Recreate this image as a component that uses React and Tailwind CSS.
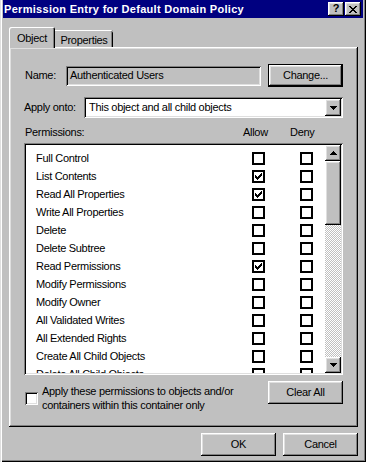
const raised =
  "shadow-[inset_-1px_-1px_#000,inset_1px_1px_#fff,inset_-2px_-2px_#808080,inset_2px_2px_#dfdfdf]";
const sunken =
  "shadow-[inset_1px_1px_#808080,inset_-1px_-1px_#fff,inset_2px_2px_#000,inset_-2px_-2px_#dfdfdf]";

const perms = [
  ["Full Control", false],
  ["List Contents", true],
  ["Read All Properties", true],
  ["Write All Properties", false],
  ["Delete", false],
  ["Delete Subtree", false],
  ["Read Permissions", true],
  ["Modify Permissions", false],
  ["Modify Owner", false],
  ["All Validated Writes", false],
  ["All Extended Rights", false],
  ["Create All Child Objects", false],
  ["Delete All Child Objects", false],
];

// classic 7x7 check mark, one 3px column per x
const Check = () => (
  <svg width="7" height="7" viewBox="0 0 7 7" shapeRendering="crispEdges">
    {[2, 3, 4, 3, 2, 1, 0].map((y, x) => (
      <rect key={x} x={x} y={y} width="1" height="3" fill="#000" />
    ))}
  </svg>
);

const FlatBox = ({ checked }) => (
  <div className="w-[13px] h-[13px] border-2 border-black bg-white flex items-center justify-center">
    {checked && <Check />}
  </div>
);

const Arrow = ({ down }) => (
  <svg width="7" height="4" viewBox="0 0 7 4" shapeRendering="crispEdges">
    {down ? (
      <polygon points="0,0 7,0 3.5,4" fill="#000" />
    ) : (
      <polygon points="3.5,0 7,4 0,4" fill="#000" />
    )}
  </svg>
);

const Button = ({ children, className = "" }) => (
  <div className={`bg-[#c0c0c0] flex items-center justify-center ${raised} ${className}`}>
    {children}
  </div>
);

export default function App() {
  return (
    <div className="w-[366px] h-[462px] bg-[#c0c0c0] flex flex-col px-[3px] font-['Liberation_Sans',Arial,sans-serif] text-[11px] tracking-[-0.3px] text-black shadow-[inset_1px_0_#dfdfdf,inset_2px_0_#fff,inset_-1px_-1px_#000,inset_-2px_-2px_#808080] overflow-hidden select-none">
      {/* title bar */}
      <div className="h-[18px] bg-[#000080] flex items-center justify-between pl-[1px] pr-[2px] shrink-0">
        <span className="text-white font-bold tracking-[0.3px]">Permission Entry for Default Domain Policy</span>
        <div className="flex gap-[1px]">
          <Button className="w-[16px] h-[14px] font-bold text-[11px] tracking-normal pb-[1px]">?</Button>
          <Button className="w-[16px] h-[14px]">
            <svg width="8" height="7" viewBox="0 0 8 7" shapeRendering="crispEdges">
              <path d="M0 0h2v1h-2zM6 0h2v1h-2zM1 1h2v1h-2zM5 1h2v1h-2zM2 2h4v1h-4zM3 3h2v1h-2zM2 4h4v1h-4zM1 5h2v1h-2zM5 5h2v1h-2zM0 6h2v1h-2zM6 6h2v1h-2z" fill="#000" />
            </svg>
          </Button>
        </div>
      </div>

      {/* tabs */}
      <div className="h-[20px] mt-[9px] ml-[6px] flex items-end shrink-0">
        <div className="relative z-10 w-[46px] h-[21px] -mb-[1px] bg-[#c0c0c0] rounded-tl-[2px] rounded-tr-[2px] pt-[3px] text-center shadow-[inset_1px_1px_#fff,inset_-1px_0_#000,inset_-2px_0_#808080]">
          Object
        </div>
        <div className="w-[58px] h-[17px] bg-[#c0c0c0] rounded-tr-[2px] pt-[2px] text-center shadow-[inset_0_1px_#fff,inset_-1px_0_#000,inset_-2px_0_#808080]">
          Properties
        </div>
      </div>

      {/* panel */}
      <div className={`ml-[6px] mr-[5px] h-[380px] shrink-0 flex flex-col pt-[17px] px-[15px] ${raised}`}>
        <div className="flex items-center h-[23px]">
          <span className="w-[42px] pl-[1px]">Name:</span>
          <div className={`w-[195px] h-[20px] flex items-center pl-[4px] ${sunken}`}>Authenticated Users</div>
          <div className="ml-[7px] w-[75px] h-[23px] border border-black">
            <Button className="w-full h-full">Change...</Button>
          </div>
        </div>

        <div className="flex items-center mt-[10px] h-[21px]">
          <span className="w-[60px]">Apply onto:</span>
          <div className={`flex-1 h-[21px] bg-white flex items-center p-[2px] ${sunken}`}>
            <span className="flex-1 pl-[3px]">This object and all child objects</span>
            <Button className="w-[16px] h-[17px]">
              <Arrow down />
            </Button>
          </div>
        </div>

        <div className="flex mt-[8px] h-[13px] leading-[13px]">
          <span className="w-[219px] pl-[1px]">Permissions:</span>
          <span className="w-[47px]">Allow</span>
          <span>Deny</span>
        </div>

        <div className={`mt-[4px] h-[232px] bg-white flex p-[2px] ${sunken}`}>
          <div className="flex-1 overflow-hidden pt-[4px]">
            {perms.map(([label, allow]) => (
              <div key={label} className="h-[18px] flex items-center">
                <span className="w-[226px] pl-[10px] whitespace-nowrap">{label}</span>
                <FlatBox checked={allow} />
                <div className="w-[35px]" />
                <FlatBox checked={false} />
              </div>
            ))}
          </div>
          <div className="w-[16px] flex flex-col">
            <Button className="h-[16px] shrink-0">
              <Arrow />
            </Button>
            <Button className="h-[64px] shrink-0" />
            <div className="flex-1 bg-[image:repeating-conic-gradient(#c0c0c0_0_25%,#fff_0_50%)] bg-size-[2px_2px]" />
            <Button className="h-[16px] shrink-0">
              <Arrow down />
            </Button>
          </div>
        </div>

        <div className="flex items-start justify-between mt-[6px]">
          <div className="flex items-center mt-[3px] pl-[1px]">
            <div className={`w-[13px] h-[13px] bg-white ${sunken}`} />
            <div className="ml-[4px] leading-[14px]">
              Apply these permissions to objects and/or
              <br />
              containers within this container only
            </div>
          </div>
          <Button className="w-[75px] h-[23px]">Clear All</Button>
        </div>
      </div>

      {/* dialog buttons */}
      <div className="flex justify-end gap-[7px] mt-[6px] mr-[5px] shrink-0">
        <Button className="w-[75px] h-[23px]">OK</Button>
        <Button className="w-[75px] h-[23px]">Cancel</Button>
      </div>
    </div>
  );
}
